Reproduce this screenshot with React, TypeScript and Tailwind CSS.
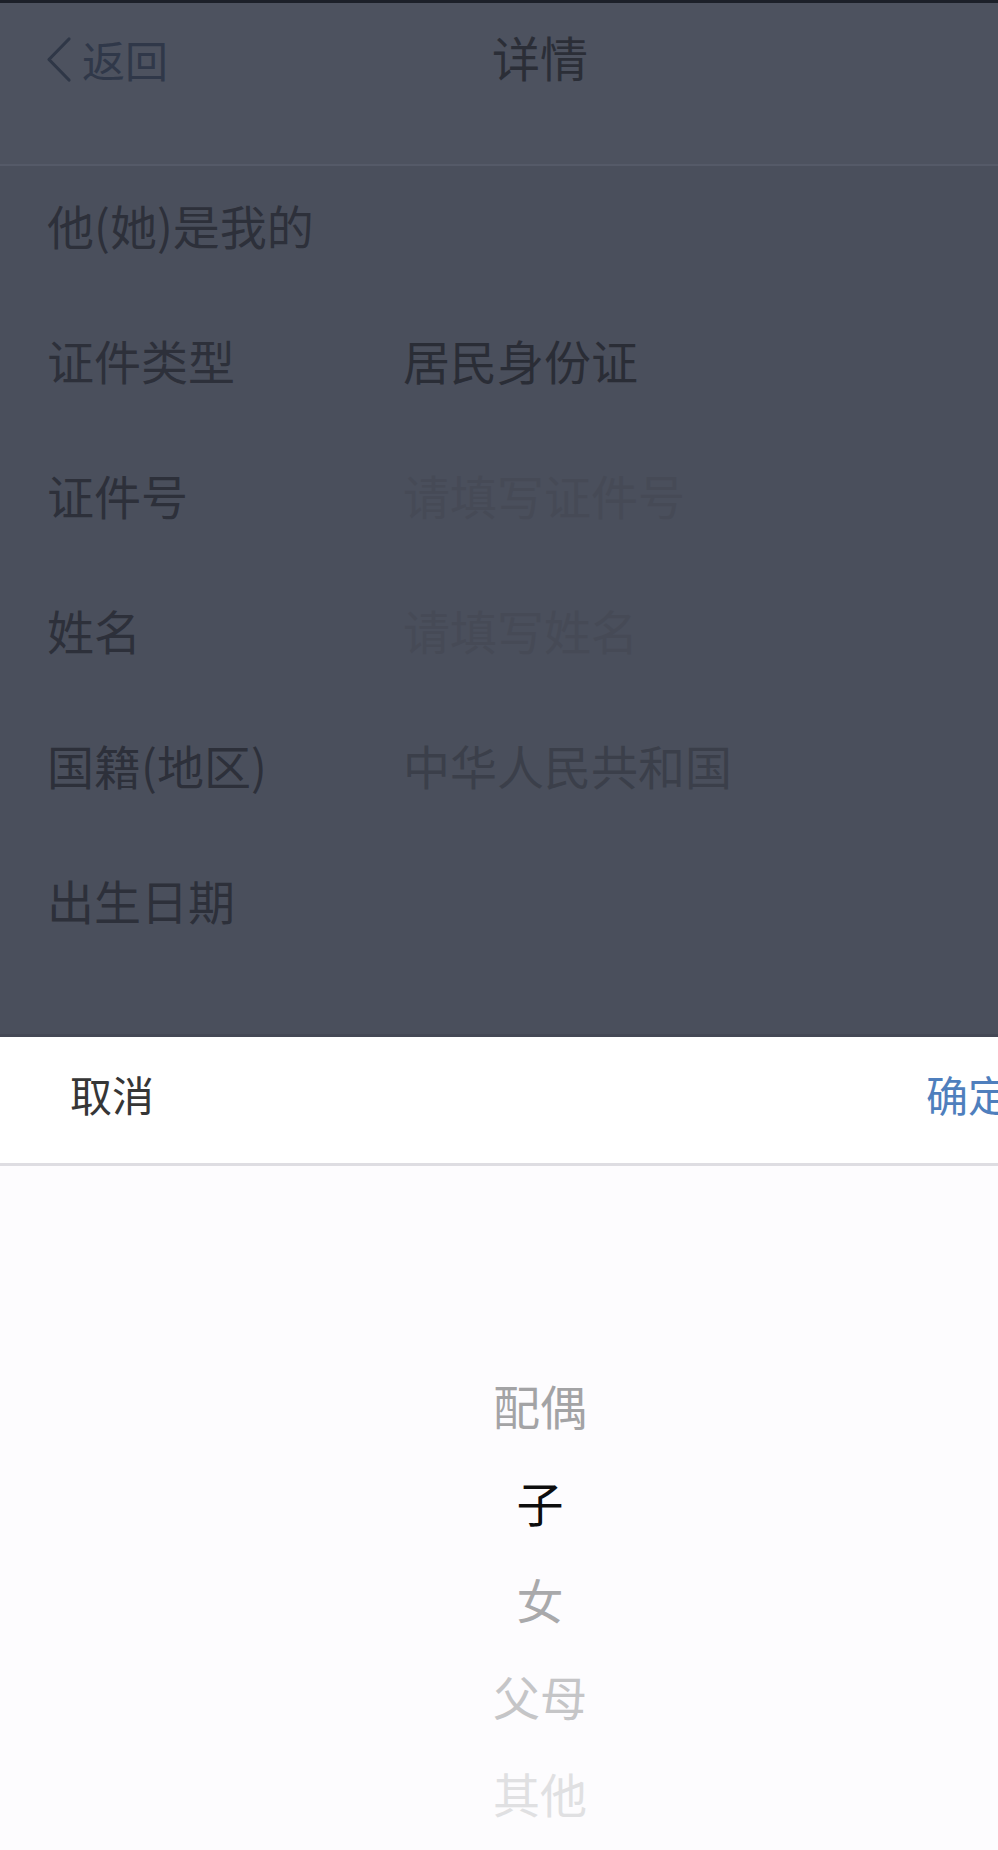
export default function App() {
  const rows: { label: string; value?: string; cls?: string }[] = [
    { label: "他(她)是我的" },
    { label: "证件类型", value: "居民身份证", cls: "text-[#2a2d36]" },
    { label: "证件号", value: "请填写证件号", cls: "text-[#464a56]" },
    { label: "姓名", value: "请填写姓名", cls: "text-[#464a56]" },
    { label: "国籍(地区)", value: "中华人民共和国", cls: "text-[#3b3f4a]" },
    { label: "出生日期" },
  ];
  const options: { text: string; cls: string }[] = [
    { text: "配偶", cls: "text-[#a3a3a5]" },
    { text: "子", cls: "text-[#0d0d0d]" },
    { text: "女", cls: "text-[#a9a9ab]" },
    { text: "父母", cls: "text-[#c5c5c7]" },
    { text: "其他", cls: "text-[#e0e0e2]" },
  ];
  return (
    <div className="w-[998px] h-[1850px] overflow-hidden bg-[#4a4f5c] font-['Noto_Sans_CJK_SC','Noto_Sans',sans-serif]">
      <div className="w-[1080px] h-full flex flex-col">
        <div className="h-[1037px] flex flex-col shrink-0">
          <div className="h-[3px] bg-[#1c2029] shrink-0" />
          <header className="h-[163px] shrink-0 bg-[#4d525f] border-b-2 border-[#555a68]">
            <div className="h-[106px] grid grid-cols-[1fr_auto_1fr] items-center">
              <div className="flex items-center pl-[45px] gap-[10px] text-[#303849] mt-[6px]">
                <svg width="27" height="47" viewBox="0 0 27 47" fill="none">
                  <path d="M24 3 L4 23.5 L24 44" stroke="#2f3747" strokeWidth="3.2" strokeLinecap="round" strokeLinejoin="round" />
                </svg>
                <span className="text-[43px] leading-none">返回</span>
              </div>
              <div className="text-[48px] leading-none text-[#2b2e37]">详情</div>
              <div />
            </div>
          </header>
          <div className="flex flex-col">
            {rows.map((r) => (
              <div key={r.label} className="h-[135px] pb-[19px] flex items-center pl-[47px]">
                <span className="w-[356px] text-[47px] leading-none text-[#2d303a] whitespace-nowrap">{r.label}</span>
                {r.value && (
                  <span className={`text-[47px] leading-none whitespace-nowrap ${r.cls}`}>{r.value}</span>
                )}
              </div>
            ))}
          </div>
          <div className="flex-1" />
          <div className="h-[3px] bg-[#444855]" />
        </div>
        <div className="flex-1 bg-[#fdfcfe] flex flex-col">
          <div className="h-[126px] bg-white flex items-center justify-between px-[70px] pb-[12px]">
            <span className="text-[42px] leading-none text-[#363636]">取消</span>
            <span className="text-[42px] leading-none text-[#4f7fbd]">确定</span>
          </div>
          <div className="h-[3px] bg-[#dedde2]" />
          <div className="flex flex-col pt-[190px]">
            {options.map((o) => (
              <div key={o.text} className="h-[97px] flex items-center justify-center">
                <span className={`text-[47px] leading-none ${o.cls}`}>{o.text}</span>
              </div>
            ))}
          </div>
        </div>
      </div>
    </div>
  );
}
